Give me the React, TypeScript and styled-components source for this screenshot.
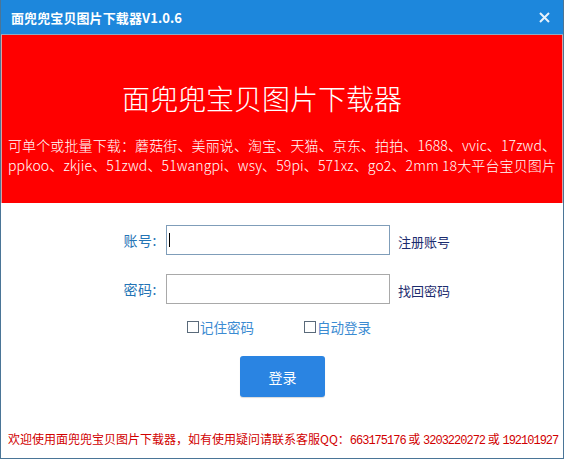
import styled, { createGlobalStyle } from 'styled-components';

const GlobalStyle = createGlobalStyle`
  html, body {
    margin: 0;
    padding: 0;
    background: #ffffff;
  }
  body {
    font-family: "Noto Sans CJK SC", "Liberation Sans", sans-serif;
  }
`;

const Window = styled.div`
  width: 564px;
  height: 459px;
  box-sizing: border-box;
  border: 1px solid #4a7597;
  border-top: none;
  display: flex;
  flex-direction: column;
  background: #ffffff;
`;

const TitleBar = styled.div`
  height: 34px;
  background: #1d87dc;
  display: flex;
  align-items: center;
  justify-content: space-between;
  padding: 0 12px 0 10px;
  border-bottom: 1px solid #8fa9c2;
`;

const TitleText = styled.div`
  color: #ffffff;
  font-size: 13px;
  font-weight: 700;
  letter-spacing: 0.1px;
`;

const CloseButton = styled.div`
  width: 14px;
  height: 14px;
  display: flex;
  align-items: center;
  justify-content: center;
`;

const Banner = styled.div`
  height: 168px;
  background: #ff0000;
  box-sizing: border-box;
  padding-top: 45px;
  border-left: 1px solid #d9a0a0;
  border-right: 1px solid #d9a0a0;
  display: flex;
  flex-direction: column;
`;

const BannerTitle = styled.div`
  color: #ffffff;
  font-size: 28px;
  line-height: 36px;
  text-align: center;
  padding-right: 40px;
  font-weight: 300;
`;

const BannerDesc = styled.div`
  margin-top: 19px;
  padding-left: 6px;
  color: #ffffff;
  font-size: 14px;
  line-height: 20px;
  white-space: nowrap;
  font-weight: 300;
  letter-spacing: 0.12px;
`;

const Form = styled.div`
  flex: 1;
  display: flex;
  flex-direction: column;
  padding-top: 22px;
`;

const Row = styled.div<{ $gap?: number }>`
  display: flex;
  align-items: center;
  margin-top: ${(p) => p.$gap ?? 0}px;
`;

const Label = styled.div`
  width: 165px;
  text-align: right;
  padding-right: 9px;
  box-sizing: border-box;
  color: #2474b5;
  font-size: 14px;
  letter-spacing: 0.5px;
`;

const Input = styled.div<{ $focused?: boolean }>`
  width: 224px;
  height: 30px;
  box-sizing: border-box;
  border: 1px solid ${(p) => (p.$focused ? '#7f9db9' : '#a9a9a9')};
  background: #ffffff;
  display: flex;
  align-items: center;
  padding-left: 2px;
`;

const Caret = styled.div`
  width: 1px;
  height: 14px;
  background: #000000;
`;

const Link = styled.div`
  margin-left: 8px;
  margin-top: 2px;
  color: #1c2c6e;
  font-size: 13px;
`;

const CheckRow = styled.div`
  display: flex;
  margin-top: 13px;
  padding-left: 186px;
  gap: 50px;
  line-height: 20px;
`;

const Check = styled.div`
  display: flex;
  align-items: center;
  color: #3b8bd2;
  font-size: 13.5px;
`;

const Box = styled.span`
  width: 12px;
  height: 12px;
  box-sizing: border-box;
  border: 1px solid #5a6a7a;
  background: #ffffff;
  margin-right: 1px;
`;

const LoginButton = styled.div`
  margin: 19px 0 0 239px;
  width: 85px;
  height: 41px;
  background: #2a84e2;
  border-radius: 3px;
  color: #ffffff;
  font-size: 14px;
  display: flex;
  align-items: center;
  justify-content: center;
  box-shadow: 0 1px 1px rgba(0, 0, 0, 0.15);
`;

const Footer = styled.div`
  margin-top: auto;
  padding: 0 0 8px 7px;
  color: #d10000;
  font-size: 12px;
  line-height: 18px;
  white-space: nowrap;
`;

const Num = styled.span`
  font-family: "Liberation Mono", monospace;
  font-size: 12px;
  letter-spacing: -1px;
`;

const App = () => {
  return (
    <>
      <GlobalStyle />
      <Window>
        <TitleBar>
          <TitleText>面兜兜宝贝图片下载器V1.0.6</TitleText>
          <CloseButton>
            <svg width="11" height="11" viewBox="0 0 11 11">
              <path d="M1 1 L10 10 M10 1 L1 10" stroke="#e8f2fb" strokeWidth="2" />
            </svg>
          </CloseButton>
        </TitleBar>
        <Banner>
          <BannerTitle>面兜兜宝贝图片下载器</BannerTitle>
          <BannerDesc>
            可单个或批量下载：蘑菇街、美丽说、淘宝、天猫、京东、拍拍、1688、vvic、17zwd、
            <br />
            ppkoo、zkjie、51zwd、51wangpi、wsy、59pi、571xz、go2、2mm 18大平台宝贝图片
          </BannerDesc>
        </Banner>
        <Form>
          <Row>
            <Label>账号:</Label>
            <Input $focused>
              <Caret />
            </Input>
            <Link>注册账号</Link>
          </Row>
          <Row $gap={19}>
            <Label>密码:</Label>
            <Input />
            <Link>找回密码</Link>
          </Row>
          <CheckRow>
            <Check>
              <Box />
              记住密码
            </Check>
            <Check>
              <Box />
              自动登录
            </Check>
          </CheckRow>
          <LoginButton>登录</LoginButton>
          <Footer>
            欢迎使用面兜兜宝贝图片下载器，如有使用疑问请联系客服QQ：<Num>663175176</Num> 或{' '}
            <Num>3203220272</Num> 或 <Num>192101927</Num>
          </Footer>
        </Form>
      </Window>
    </>
  );
};

export default App;
